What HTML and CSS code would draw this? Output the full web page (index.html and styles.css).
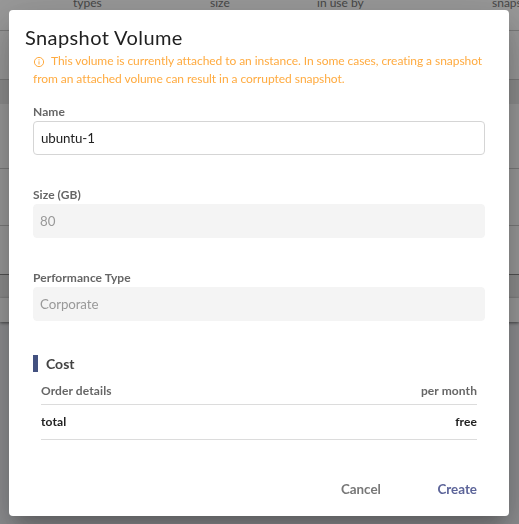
FILE: index.html
```
<!DOCTYPE html>
<html lang="en">
<head>
<meta charset="utf-8">
<title>Snapshot Volume</title>
<link rel="stylesheet" href="styles.css">
</head>
<body>
<div class="page">
  <div class="table-head"><span>types</span><span>size</span><span>in use by</span><span>snapshots</span></div>
  <div class="row row-first"></div>
  <div class="band"></div>
  <div class="row row-a"></div>
  <div class="row row-b"></div>
  <div class="row row-c"></div>
  <div class="band band-low"></div>
  <div class="row row-last"></div>
</div>
<div class="backdrop">
  <form class="dialog">
    <h2 class="title">Snapshot Volume</h2>
    <div class="content">
      <p class="warning"><svg class="info" viewBox="0 0 12 12" fill="none" stroke="currentColor"><circle cx="6" cy="6" r="4.6"/><path d="M6 5.3v3.2M6 3.3v1.1"/></svg>This volume is currently attached to an instance. In some cases, creating a snapshot from an attached volume can result in a corrupted snapshot.</p>
      <div class="field"><label for="name">Name</label><input id="name" value="ubuntu-1"></div>
      <div class="field"><label for="size">Size (GB)</label><input id="size" value="80" disabled></div>
      <div class="field"><label for="type">Performance Type</label><input id="type" value="Corporate" disabled></div>
      <h3 class="cost">Cost</h3>
      <div class="order">
        <div class="order-head"><span>Order details</span><span>per month</span></div>
        <div class="order-total"><span>total</span><span>free</span></div>
      </div>
    </div>
    <div class="actions"><button type="button">Cancel</button><button type="button" class="primary">Create</button></div>
  </form>
</div>
</body>
</html>
```
FILE: styles.css
```
* { box-sizing: border-box; }
body { margin: 0; font-family: Lato, sans-serif; height: 524px; overflow: hidden; background: #ecedf1; }
.page { display: flex; flex-direction: column; height: 524px; overflow: hidden; }
.table-head { display: grid; grid-template-columns: 137px 107px 175px 27px; height: 31px; padding-left: 73px; background: #fff; border-bottom: 1px solid #ccc; font-size: 12px; line-height: 16px; color: #777; white-space: nowrap; }
.table-head span { margin-top: -5px; }
.row { background: #fff; border-bottom: 1px solid #ccc; }
.row-first { height: 49px; }
.band { height: 24px; background: #ebebeb; }
.row-a { height: 65px; }
.row-b { height: 57px; }
.row-c { height: 49px; border-color: #888; }
.band-low { height: 23px; }
.row-last { height: 24px; border: 0; box-shadow: 0 1px 3px #0008; }
.backdrop { position: fixed; inset: 0; background: rgba(0, 0, 0, .4); padding: 10px 10px 8px 9px; }
.dialog { height: 506px; display: flex; flex-direction: column; background: #fff; border-radius: 4px; box-shadow: 0 11px 15px -7px rgba(0,0,0,.2), 0 24px 38px 3px rgba(0,0,0,.14), 0 9px 46px 8px rgba(0,0,0,.12); }
.title { margin: 15px 16px 0; font-size: 20px; line-height: 24px; font-weight: 400; letter-spacing: .4px; color: #212121; }
.content { padding: 3px 24px 0; flex: 1; }
.warning { margin: 0; height: 36px; font-size: 12px; line-height: 18px; letter-spacing: -.06px; color: #ffab40; }
.info { width: 12px; height: 12px; margin-right: 6px; vertical-align: -3px; }
.field { height: 83px; }
.field:first-of-type { margin-top: 16px; }
label { display: block; font-size: 12px; line-height: 15px; font-weight: 700; letter-spacing: .05px; color: #666; margin-bottom: 2px; }
input { display: block; width: 100%; height: 34px; padding: 0 7px 1px; border: 1px solid #d5d5d5; border-radius: 4px; background: #fff; font: 13.333px Lato, sans-serif; letter-spacing: -.1px; color: #212121; }
input:disabled { background: #f4f4f4; border-color: #f4f4f4; color: #999; padding: 0 6px 1px; }
.cost { margin: 2px 0 0; height: 17px; border-left: 5px solid #435180; padding-left: 8px; font-size: 14px; line-height: 18px; font-weight: 700; color: #424242; }
.order { margin: 8px 8px 0; font-size: 12px; font-weight: 700; letter-spacing: .1px; }
.order > div { display: flex; justify-content: space-between; border-bottom: 1px solid #dcdcdc; }
.order-head { height: 25px; line-height: 22px; color: #666; }
.order-total { height: 35px; line-height: 34px; color: #212121; }
.actions { display: flex; justify-content: flex-end; gap: 56.5px; padding: 0 32px 17px; }
button { border: 0; padding: 0; background: none; font: 700 13.4px/20px Lato, sans-serif; color: #777; }
.primary { color: #5c6499; }
```
